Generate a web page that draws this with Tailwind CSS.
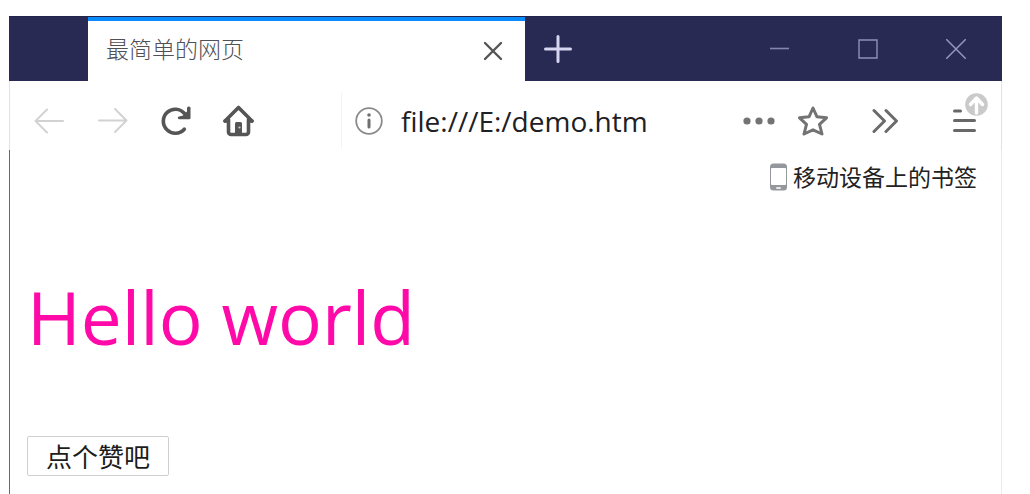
<!DOCTYPE html>
<html lang="zh-CN">
<head>
<meta charset="utf-8">
<meta name="viewport" content="width=device-width, initial-scale=1">
<title>最简单的网页</title>
<script src="https://cdn.jsdelivr.net/npm/@tailwindcss/browser@4"></script>
</head>
<body class="bg-white font-['Open_Sans','Noto_Sans_CJK_SC',sans-serif] text-[#222222]">
<div class="flex min-h-screen flex-col pt-4 pr-7 pl-[9px]">
  <header class="flex h-[65px] items-stretch border-t border-[#23244a] bg-[#282a54] pl-[79px]">
    <div class="flex w-[437px] items-center justify-between border-t-4 border-[#0a8cff] bg-white pr-[22px] pl-[18px]">
      <span class="pb-1 text-[23px] leading-8 font-light text-[#505056]">最简单的网页</span>
      <button type="button" aria-label="关闭标签页">
        <svg class="block" width="20" height="20" viewBox="0 0 20 20" fill="none" stroke="#555555" stroke-width="2.4" stroke-linecap="round"><path d="M2 2 18 18M18 2 2 18"/></svg>
      </button>
    </div>
    <button type="button" aria-label="新建标签页" class="ml-[19px]">
      <svg class="block" width="28" height="28" viewBox="0 0 28 28" fill="none" stroke="#d6d6f0" stroke-width="3" stroke-linecap="round"><path d="M14 1.5v25M1.5 14h25"/></svg>
    </button>
    <div class="ml-auto flex items-center gap-[68px] pr-9">
      <button type="button" aria-label="最小化">
        <svg class="block" width="20" height="20" viewBox="0 0 20 20" fill="none" stroke="#8586b0" stroke-width="1.6"><path d="M0 9.5h19"/></svg>
      </button>
      <button type="button" aria-label="最大化">
        <svg class="block" width="20" height="20" viewBox="0 0 20 20" fill="none" stroke="#8f90b8" stroke-width="1.4"><path d="M1 1h18v18H1z"/></svg>
      </button>
      <button type="button" aria-label="关闭窗口">
        <svg class="block" width="20" height="20" viewBox="0 0 20 20" fill="none" stroke="#9596bc" stroke-width="1.5"><path d="M0 0 20 20M20 0 0 20"/></svg>
      </button>
    </div>
  </header>

  <nav class="flex h-[69px] items-center border-x border-[#e2e2e6] pt-[10px] pr-3 pl-6">
    <div class="flex items-center gap-8">
      <button type="button" aria-label="后退">
        <svg class="block" width="31" height="28" viewBox="0 0 31 28" fill="none" stroke="#d2d2d2" stroke-width="2" stroke-linecap="round" stroke-linejoin="round"><path d="M29 14H2M13 2.5 1.5 14 13 25.5"/></svg>
      </button>
      <button type="button" aria-label="前进">
        <svg class="block" width="31" height="28" viewBox="0 0 31 28" fill="none" stroke="#d2d2d2" stroke-width="2" stroke-linecap="round" stroke-linejoin="round"><path d="M2 13.500h27M18 2 29.500 13.500 18 25"/></svg>
      </button>
      <button type="button" aria-label="重新加载">
        <svg class="block" width="31" height="30" viewBox="0 0 31 30" fill="none" stroke="#555555" stroke-width="3.600" stroke-linecap="round"><path d="M24.300 23.200A12 12 0 1 1 24.500 7.500"/><path d="M30.500 1.800V12a1.300 1.300 0 0 1-1.300 1.300H19.300a1.500 1.500 0 0 1-1-2.600L23 9.500 27 5.500V2.200q0-1.700 1.700-1.700t1.800 1.300Z" fill="#555555" stroke="none"/></svg>
      </button>
      <button type="button" aria-label="主页">
        <svg class="block" width="31" height="32" viewBox="0 0 31 32" fill="none" stroke="#555555" stroke-width="3.600" stroke-linecap="round" stroke-linejoin="round"><path d="M2 16 15.500 2.500 29 16"/><path d="M5.500 14.500V27a2.500 2.500 0 0 0 2.500 2.500H23a2.500 2.500 0 0 0 2.500-2.500V14.500"/><path d="M2 16H5M26 16h3" stroke-width="3.400"/><path d="M12 29V18.500a1.500 1.500 0 0 1 1.500-1.500h4a1.500 1.500 0 0 1 1.500 1.500V29Z" fill="#555555" stroke="none"/><circle cx="16.500" cy="22.500" r="1.100" fill="#cccccc" stroke="none"/></svg>
      </button>
    </div>

    <div class="ml-[87px] flex h-[57px] min-w-0 flex-1 items-center border border-transparent border-l-[#f3f3f3] pl-[13px]">
      <svg class="block shrink-0" width="28" height="28" viewBox="0 0 28 28" fill="none" stroke="#8b8b8b" stroke-width="1.800"><circle cx="14" cy="14" r="12.800"/><path d="M14 13v7" stroke="#6f6f6f" stroke-width="3" stroke-linecap="round"/><circle cx="14" cy="8" r="1.800" fill="#6f6f6f" stroke="none"/></svg>
      <input type="text" aria-label="网址" value="file:///E:/demo.htm" class="ml-[18px] min-w-0 flex-1 bg-transparent text-[28px] leading-9 text-[#202024] outline-none">
      <button type="button" aria-label="页面操作">
        <svg class="block" width="32" height="8" viewBox="0 0 32 8" fill="#737373"><circle cx="4" cy="4" r="3.600"/><circle cx="16" cy="4" r="3.600"/><circle cx="28" cy="4" r="3.600"/></svg>
      </button>
      <button type="button" aria-label="添加书签" class="ml-[23px]">
        <svg class="block" width="30" height="30" viewBox="0 0 30 30" fill="none" stroke="#737373" stroke-width="3" stroke-linejoin="round"><path d="M15 2 19 10.800 28.500 11.800 21.500 18.300 24 28 15 23.800 6 28 8.500 18.300 1.500 11.800 11 10.800Z"/></svg>
      </button>
    </div>

    <button type="button" aria-label="更多工具" class="ml-[43px]">
      <svg class="block" width="27" height="26" viewBox="0 0 27 26" fill="none" stroke="#6b6b6b" stroke-width="3" stroke-linecap="round" stroke-linejoin="round"><path d="M2 2.500 12.500 13 2 23.500M14 2.500 24.500 13 14 23.500"/></svg>
    </button>
    <button type="button" aria-label="打开菜单" class="ml-[53px]">
      <svg class="block" width="37" height="56" viewBox="0 0 37 56" fill="none" stroke="#686868" stroke-width="3" stroke-linecap="round"><path d="M2.500 18h6M2.500 27.500h20M2.500 37.500h20"/><circle cx="24.500" cy="11.500" r="11.300" fill="#cacaca" stroke="none"/><path d="M24.500 20V6M18.500 11.500 24.500 5 30.500 11.500" stroke="#ffffff" stroke-width="3.400" stroke-linejoin="round"/></svg>
    </button>
  </nav>

  <main class="flex-1 border-r border-l border-r-[#ececef] border-l-[#686870] pt-[11px]">
    <div class="flex justify-end pr-6">
      <a href="#" class="flex items-center gap-[6px] text-[23px] leading-8">
        <svg class="block" width="17" height="28" viewBox="0 0 17 28"><rect x="0" y="0.500" width="17" height="27" rx="3.500" fill="#94989d"/><rect x="1" y="5" width="15" height="17" rx="1" fill="#ffffff"/><rect x="6" y="24" width="5" height="2" rx="1" fill="#e8e8e8"/></svg>
        <span>移动设备上的书签</span>
      </a>
    </div>
    <div class="px-[17px]">
      <h1 class="mt-[74px] text-[73px] leading-[100px] text-[#ff0aa8]">Hello world</h1>
      <button type="button" class="mt-[69px] h-10 rounded-xs border border-[#cfcfcf] bg-white px-[18px] pt-[2px] text-[26px] leading-9 text-[#1c1c1c]">点个赞吧</button>
    </div>
  </main>
</div>
</body>
</html>
